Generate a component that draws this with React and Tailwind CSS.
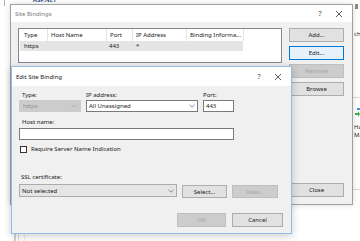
import React from "react";

const Btn = ({ label, disabled, focused, className = "" }) => (
  <div
    className={`flex items-center justify-center border text-[6px] leading-none ${
      disabled
        ? "bg-[#cccccc] border-[#bfbfbf] text-[#a3a3a3]"
        : focused
        ? "bg-[#e5f1fb] border-[#0078d7] text-[#1a1a1a]"
        : "bg-[#e1e1e1] border-[#adadad] text-[#1a1a1a]"
    } ${className}`}
  >
    {label}
  </div>
);

const Chevron = ({ color = "#707070" }) => (
  <svg width="6" height="4" viewBox="0 0 6 4">
    <path d="M0.5 0.8 L3 3.2 L5.5 0.8" fill="none" stroke={color} strokeWidth="0.8" />
  </svg>
);

const TitleBar = ({ title, className = "" }) => (
  <div className={`flex shrink-0 items-center bg-white pl-[4px] text-[6px] leading-none text-[#1a1a1a] ${className}`}>
    <span className="flex-1">{title}</span>
    <span className="w-[22px] text-center text-[7px] text-[#444]">?</span>
    <svg width="8" height="8" viewBox="0 0 8 8" className="mr-[9px] ml-[4px]">
      <path d="M1 1 L7 7 M7 1 L1 7" stroke="#333" strokeWidth="0.8" />
    </svg>
  </div>
);

const SiteBindings = () => {
  const cols = [
    { name: "Type", w: "w-[27px]" },
    { name: "Host Name", w: "w-[59px]" },
    { name: "Port", w: "w-[26px]" },
    { name: "IP Address", w: "w-[54px]" },
    { name: "Binding Informa...", w: "w-[57px]" },
  ];
  return (
    <div className="absolute left-[10px] top-[4px] flex h-[201px] w-[343px] flex-col border border-[#a0a0a0] bg-[#f0f0f0] shadow-[0_0_6px_rgba(0,0,0,0.15)]">
      <TitleBar title="Site Bindings" className="h-[17px] text-[#7a7a7a]" />
      <div className="flex flex-1 pl-[7px] pt-[6px]">
        <div className="h-[35px] w-[264px] border border-[#828790] bg-white text-[6px] text-[#1a1a1a]">
          <div className="flex h-[12px] items-center pl-[2px]">
            {cols.map((c) => (
              <div
                key={c.name}
                className={`${c.w} h-full shrink-0 overflow-hidden whitespace-nowrap border-r border-[#e5e5e5] pl-[3px] leading-[12px]`}
              >
                {c.name}
              </div>
            ))}
          </div>
          <div className="ml-[1px] flex h-[10px] w-[223px] items-center bg-[#e5e5e5] pl-[4px] leading-none">
            <span className="w-[85px]">https</span>
            <span className="w-[27px]">443</span>
            <span>*</span>
          </div>
        </div>
        <div className="ml-[7px] flex w-[55px] flex-col">
          <Btn label="Add..." className="h-[14px]" />
          <Btn label="Edit..." focused className="mt-[4px] h-[14px]" />
          <Btn label="Remove" disabled className="mt-[4px] h-[14px]" />
          <Btn label="Browse" className="mt-[4px] h-[14px]" />
          <Btn label="Close" className="mt-[87px] h-[14px]" />
        </div>
      </div>
    </div>
  );
};

const EditBinding = () => (
  <div className="absolute left-[11px] top-[66px] flex h-[168px] w-[281px] flex-col border border-[#92bde6] bg-[#f0f0f0] shadow-[0_2px_8px_rgba(0,0,0,0.2)]">
    <TitleBar title="Edit Site Binding" className="h-[19px] pl-[3px]" />
    <div className="flex flex-col px-[7px] pt-[5px] text-[6px] leading-none text-[#1a1a1a]">
      <div className="flex h-[21px] gap-[5px]">
        <div className="flex w-[62px] flex-col">
          <span className="h-[9px] pl-[3px] leading-[8px]">Type:</span>
          <div className="flex h-[12px] items-center justify-between border border-[#cccccc] bg-[#cccccc] px-[3px] text-[#8f8f8f]">
            <span>https</span>
            <Chevron color="#a8a8a8" />
          </div>
        </div>
        <div className="flex w-[112px] flex-col">
          <span className="h-[9px] leading-[8px]">IP address:</span>
          <div className="flex h-[12px] items-center justify-between border border-[#7a7a7a] bg-white px-[2px]">
            <span>All Unassigned</span>
            <Chevron />
          </div>
        </div>
        <div className="flex w-[31px] flex-col">
          <span className="h-[9px] leading-[8px]">Port:</span>
          <div className="flex h-[12px] items-center border border-[#7a7a7a] bg-white px-[2px]">443</div>
        </div>
      </div>
      <span className="mt-[6px] h-[9px] pl-[3px] leading-[9px]">Host name:</span>
      <div className="mt-[1px] h-[12px] w-[215px] border border-[#7a7a7a] bg-white" />
      <div className="mt-[5px] flex h-[8px] items-center pl-[1px]">
        <div className="h-[7px] w-[7px] border border-[#333] bg-white" />
        <span className="ml-[4px] leading-[8px]">Require Server Name Indication</span>
      </div>
      <span className="mt-[20px] h-[9px] pl-[2px] leading-[9px]">SSL certificate:</span>
      <div className="mt-[2px] flex h-[14px] items-start">
        <div className="flex h-[13px] w-[158px] items-center justify-between border border-[#acacac] bg-[#e5e5e5] px-[2px]">
          <span>Not selected</span>
          <Chevron />
        </div>
        <Btn label="Select..." className="ml-[5px] mt-[1px] h-[13px] w-[45px]" />
        <Btn label="View..." disabled className="ml-[5px] mt-[1px] h-[13px] w-[46px]" />
      </div>
      <div className="mt-[15px] flex justify-end gap-[6px] pr-[1px]">
        <Btn label="OK" disabled className="h-[14px] w-[49px]" />
        <Btn label="Cancel" className="h-[14px] w-[51px]" />
      </div>
    </div>
  </div>
);

export default function App() {
  return (
    <div className="relative h-[241px] w-[360px] overflow-hidden bg-white font-['Segoe_UI','Noto_Sans',sans-serif]">
      {/* background IIS window bits */}
      <div className="absolute left-[4px] top-0 h-[6px] w-[1px] bg-[#b0b0b0]" />
      <div className="absolute left-[33px] top-[-4px] text-[6px] font-semibold text-[#1e3a78]">ASP.NET</div>
      <div className="absolute left-[14px] top-[234px] h-[8px] w-[2px] bg-[#d0d0d0]" />
      <div className="absolute left-[18px] top-[234px] h-[8px] w-[1px] bg-[#dcdcdc]" />
      <div className="absolute left-[24px] top-[234px] h-[8px] w-[1px] bg-[#ececec]" />
      <div className="absolute left-[355px] top-[4px] h-[5px] w-[3px] bg-[#8a8a8a]" />
      <div className="absolute left-[354px] top-[30px] text-[6px] text-[#1a1a1a]">ch</div>
      <div className="absolute left-[353px] top-[97px] h-[1px] w-[7px] bg-[#d8d8d8]" />
      <div className="absolute left-[357px] top-[108px] h-[2px] w-[3px] bg-[#3c8fd8]" />
      <svg className="absolute left-[355px] top-[111px]" width="5" height="6" viewBox="0 0 5 6">
        <path d="M0 2 H3 V0 L5 3 L3 6 V4 H0 Z" fill="#3fb24a" />
      </svg>
      <div className="absolute left-[354px] top-[123px] text-[6px] leading-[8px] text-[#1a1a1a]">
        Ha
        <br />
        Ma
      </div>
      <div className="absolute left-[353px] top-[189px] h-[1px] w-[7px] bg-[#d8d8d8]" />

      <SiteBindings />
      <EditBinding />
    </div>
  );
}
